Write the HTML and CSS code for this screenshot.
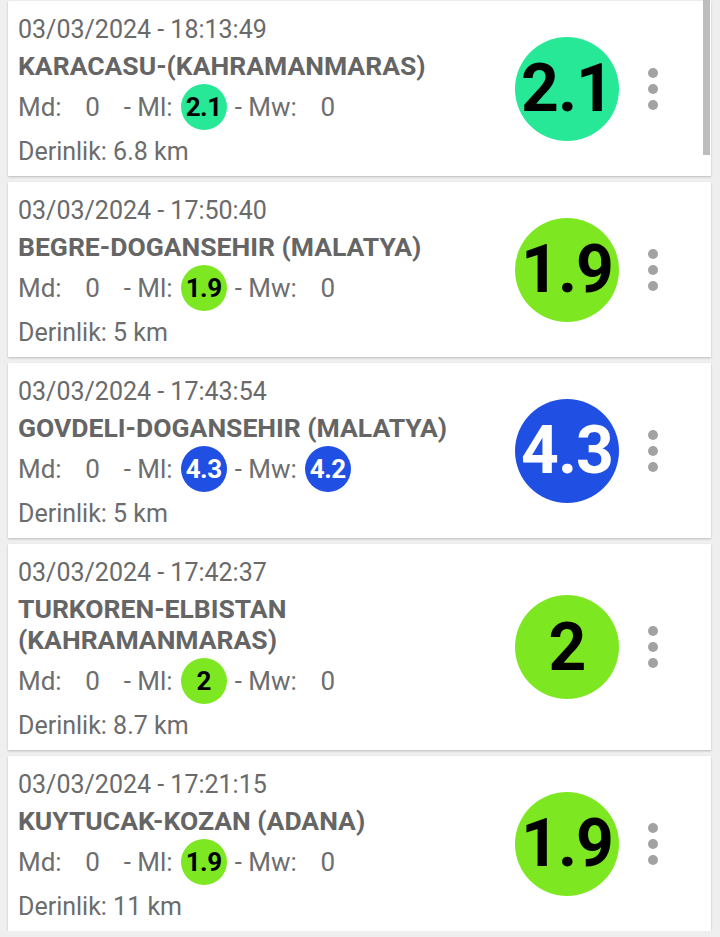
FILE: index.html
```html
<!DOCTYPE html>
<html lang="tr">
<head>
<meta charset="utf-8">
<link rel="stylesheet" href="styles.css">
</head>
<body>
<div class="list">
  <div class="card">
    <div class="info">
      <div class="date">03/03/2024 - 18:13:49</div>
      <div class="place">KARACASU-(KAHRAMANMARAS)</div>
      <div class="mags">
        <span class="lbl">Md:</span><span class="val">0</span>
        <span class="lbl">- Ml:</span><span class="val teal">2.1</span>
        <span class="lbl">- Mw:</span><span class="val">0</span>
      </div>
      <div class="depth">Derinlik: 6.8 km</div>
    </div>
    <div class="big teal">2.1</div>
    <div class="dots"><i></i><i></i><i></i></div>
  </div>

  <div class="card">
    <div class="info">
      <div class="date">03/03/2024 - 17:50:40</div>
      <div class="place">BEGRE-DOGANSEHIR (MALATYA)</div>
      <div class="mags">
        <span class="lbl">Md:</span><span class="val">0</span>
        <span class="lbl">- Ml:</span><span class="val lime">1.9</span>
        <span class="lbl">- Mw:</span><span class="val">0</span>
      </div>
      <div class="depth">Derinlik: 5 km</div>
    </div>
    <div class="big lime">1.9</div>
    <div class="dots"><i></i><i></i><i></i></div>
  </div>

  <div class="card">
    <div class="info">
      <div class="date">03/03/2024 - 17:43:54</div>
      <div class="place">GOVDELI-DOGANSEHIR (MALATYA)</div>
      <div class="mags">
        <span class="lbl">Md:</span><span class="val">0</span>
        <span class="lbl">- Ml:</span><span class="val blue">4.3</span>
        <span class="lbl">- Mw:</span><span class="val blue">4.2</span>
      </div>
      <div class="depth">Derinlik: 5 km</div>
    </div>
    <div class="big blue">4.3</div>
    <div class="dots"><i></i><i></i><i></i></div>
  </div>

  <div class="card">
    <div class="info">
      <div class="date">03/03/2024 - 17:42:37</div>
      <div class="place">TURKOREN-ELBISTAN (KAHRAMANMARAS)</div>
      <div class="mags">
        <span class="lbl">Md:</span><span class="val">0</span>
        <span class="lbl">- Ml:</span><span class="val lime">2</span>
        <span class="lbl">- Mw:</span><span class="val">0</span>
      </div>
      <div class="depth">Derinlik: 8.7 km</div>
    </div>
    <div class="big lime">2</div>
    <div class="dots"><i></i><i></i><i></i></div>
  </div>

  <div class="card">
    <div class="info">
      <div class="date">03/03/2024 - 17:21:15</div>
      <div class="place">KUYTUCAK-KOZAN (ADANA)</div>
      <div class="mags">
        <span class="lbl">Md:</span><span class="val">0</span>
        <span class="lbl">- Ml:</span><span class="val lime">1.9</span>
        <span class="lbl">- Mw:</span><span class="val">0</span>
      </div>
      <div class="depth">Derinlik: 11 km</div>
    </div>
    <div class="big lime">1.9</div>
    <div class="dots"><i></i><i></i><i></i></div>
  </div>
</div>
<div class="scrollbar"></div>
</body>
</html>
```

FILE: styles.css
```css
html, body {
  margin: 0;
  padding: 0;
}
body {
  background: #efefef;
  font-family: Roboto, "Noto Sans", "Liberation Sans", sans-serif;
  color: #707070;
  width: 720px;
  overflow: hidden;
}
.list {
  display: flex;
  flex-direction: column;
  gap: 6px;
  padding: 1px 9px 0 8px;
}
.card {
  background: #fff;
  display: flex;
  align-items: center;
  box-shadow: 0 1px 2px rgba(0,0,0,0.22);
  padding: 11px 53px 2px 10px;
}
.info {
  flex: 1;
  min-width: 0;
}
.date {
  font-size: 25px;
  line-height: 35px;
  color: #6a6a6a;
}
.place {
  font-size: 26.5px;
  font-weight: 700;
  line-height: 31px;
  margin-top: 3px;
  color: #656565;
}
.mags {
  display: flex;
  align-items: center;
  gap: 8px;
  height: 46px;
  margin-top: 3px;
  font-size: 26px;
  color: #6e6e6e;
}
.val {
  width: 46px;
  height: 46px;
  flex: none;
  border-radius: 50%;
  display: flex;
  align-items: center;
  justify-content: center;
}
.mags .val.teal, .mags .val.lime, .mags .val.blue {
  font-weight: 700;
  font-size: 26px;
  letter-spacing: -0.5px;
  color: #000;
}
.mags .val.blue { color: #fff; }
.depth {
  font-size: 25px;
  line-height: 44px;
  color: #6c6c6c;
}
.teal { background: #27e896; }
.lime { background: #7de821; }
.blue { background: #1f4fe3; }
.big {
  width: 104px;
  height: 104px;
  flex: none;
  border-radius: 50%;
  display: flex;
  align-items: center;
  justify-content: center;
  font-size: 66px;
  font-weight: 700;
  color: #000;
  letter-spacing: -1px;
  margin-top: -9px;
}
.big.blue { color: #fff; }
.dots {
  display: flex;
  flex-direction: column;
  gap: 6px;
  margin-left: 29px;
  margin-top: -9px;
  flex: none;
}
.dots i {
  display: block;
  width: 10px;
  height: 10px;
  border-radius: 50%;
  background: #a2a2a2;
}
.scrollbar {
  position: fixed;
  top: 0;
  left: 703px;
  width: 7px;
  height: 155px;
  background: #bdbdbd;
}
```
